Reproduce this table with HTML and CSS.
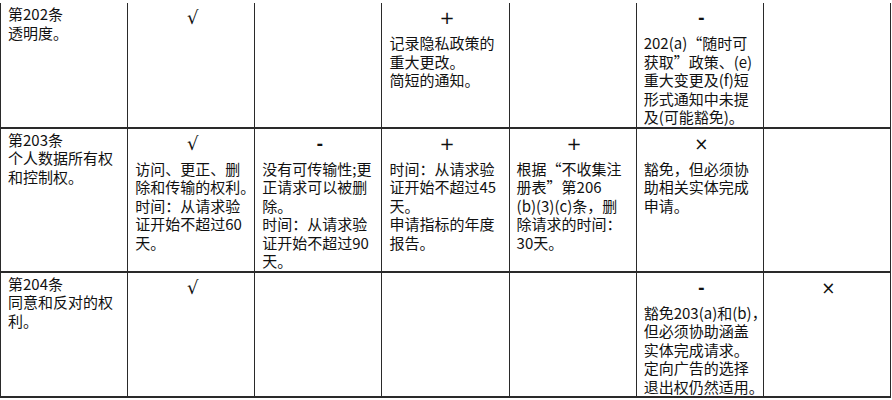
FILE: index.html
```html
<!DOCTYPE html>
<html lang="zh-CN">
<head>
<meta charset="utf-8">
<title>隐私法条款比较</title>
<link rel="stylesheet" href="styles.css">
</head>
<body>
<table class="grid">
  <tbody>
    <tr>
      <td><p>第202条<br>透明度。</p></td>
      <td><div class="sym check">√</div></td>
      <td></td>
      <td><div class="sym plus">+</div><p>记录隐私政策的<br>重大更改。</p><p>简短的通知。</p></td>
      <td></td>
      <td><div class="sym minus">-</div><p>202(a)“随时可<br>获取”政策、(e)<br>重大变更及(f)短<br>形式通知中未提<br>及(可能豁免)。</p></td>
      <td></td>
    </tr>
    <tr>
      <td><p>第203条<br>个人数据所有权<br>和控制权。</p></td>
      <td><div class="sym check">√</div><p>访问、更正、删<br>除和传输的权利。</p><p>时间：从请求验<br>证开始不超过60<br>天。</p></td>
      <td><div class="sym minus">-</div><p>没有可传输性;更<br>正请求可以被删<br>除。</p><p>时间：从请求验<br>证开始不超过90<br>天。</p></td>
      <td><div class="sym plus">+</div><p>时间：从请求验<br>证开始不超过45<br>天。</p><p>申请指标的年度<br>报告。</p></td>
      <td><div class="sym plus">+</div><p>根据“不收集注<br>册表”第206<br>(b)(3)(c)条，删<br>除请求的时间：<br>30天。</p></td>
      <td><div class="sym cross">×</div><p>豁免，但必须协<br>助相关实体完成<br>申请。</p></td>
      <td></td>
    </tr>
    <tr>
      <td><p>第204条<br>同意和反对的权<br>利。</p></td>
      <td><div class="sym check">√</div></td>
      <td></td>
      <td></td>
      <td></td>
      <td><div class="sym minus">-</div><p>豁免203(a)和(b)，<br>但必须协助涵盖<br>实体完成请求。</p><p>定向广告的选择<br>退出权仍然适用。</p></td>
      <td><div class="sym cross">×</div></td>
    </tr>
  </tbody>
</table>
</body>
</html>
```

FILE: styles.css
```css
html, body {
  margin: 0;
  padding: 0;
  background: #ffffff;
}

body {
  font-family: "Noto Sans CJK SC", "Noto Sans", sans-serif;
  font-size: 15px;
  line-height: 18.5px;
  color: #111111;
}

.grid {
  margin-top: 3px;
  width: 891px;
  border-collapse: collapse;
  table-layout: fixed;
}

.grid td {
  vertical-align: top;
  padding: 2px 4px 0 7px;
  border-left: 1px solid #2a2a2a;
  border-right: 1px solid #2a2a2a;
  border-bottom: 2px solid #2a2a2a;
}

.grid p {
  margin: 0;
  white-space: nowrap;
}

.sym {
  height: 29px;
  text-align: center;
  font-family: "DejaVu Sans", "Liberation Sans", sans-serif;
  line-height: 26px;
  color: #111;
}

.check {
  font-size: 18px;
}

.plus {
  font-size: 18px;
}

.minus {
  font-size: 16px;
  font-weight: bold;
}

.cross {
  font-size: 17px;
}
```
